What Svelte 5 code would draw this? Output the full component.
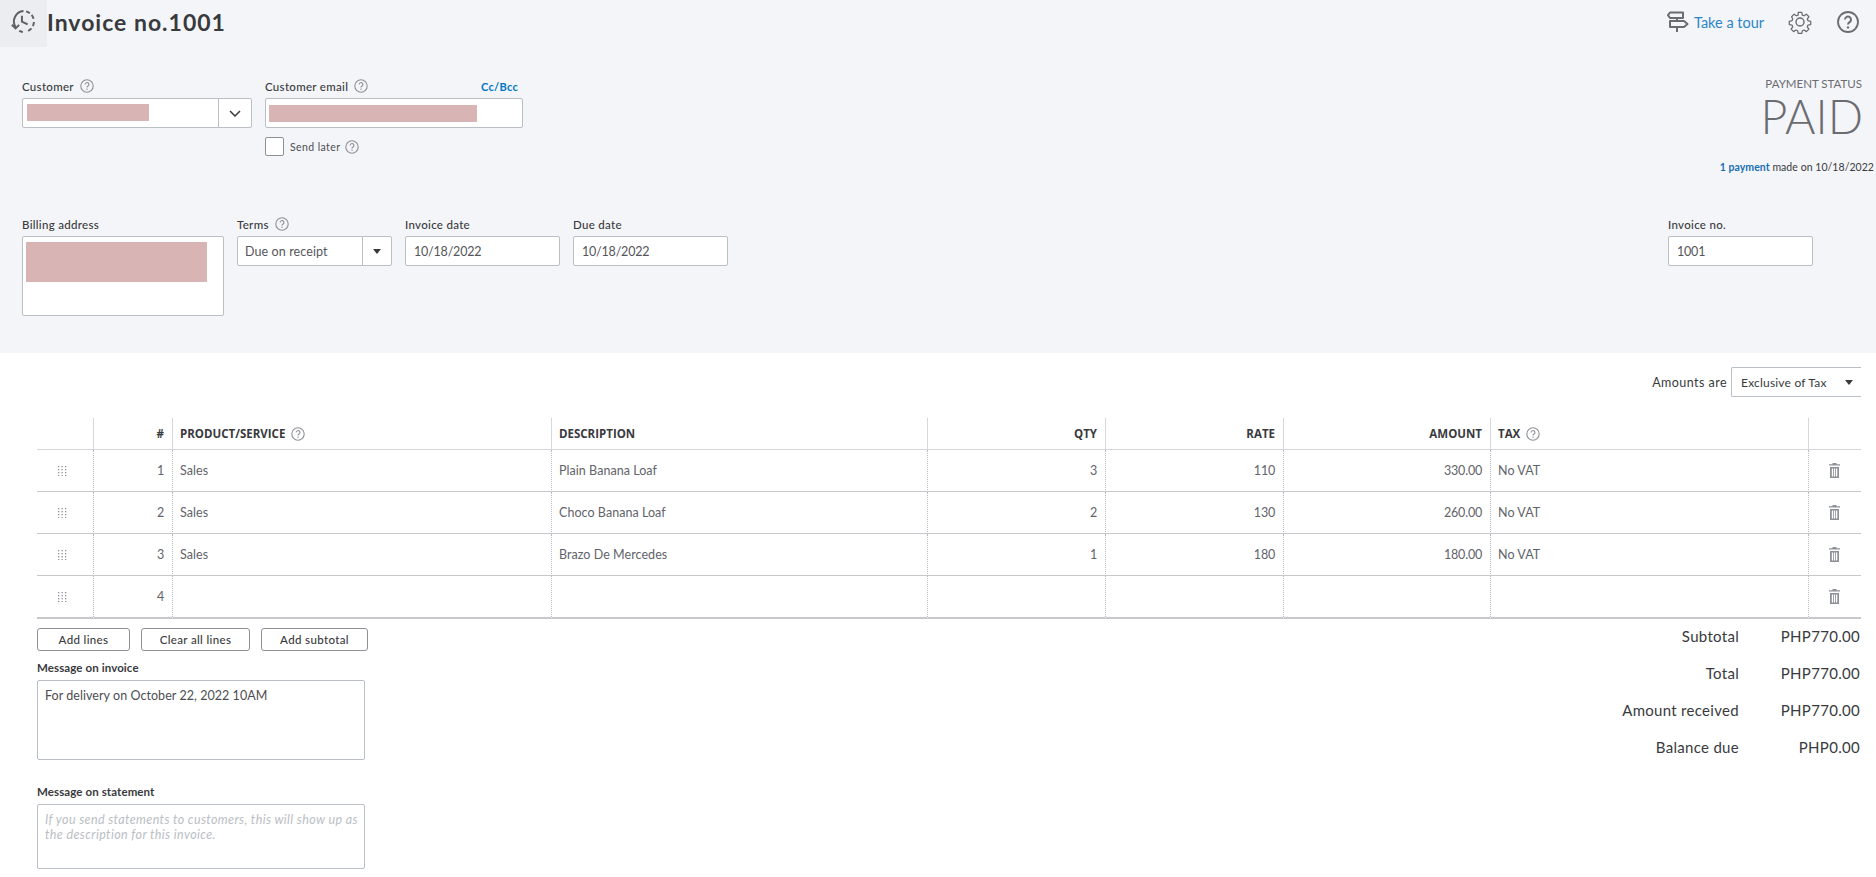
<script>
  const rows = [
    { n: 1, product: 'Sales', desc: 'Plain Banana Loaf', qty: '3', rate: '110', amount: '330.00', tax: 'No VAT' },
    { n: 2, product: 'Sales', desc: 'Choco Banana Loaf', qty: '2', rate: '130', amount: '260.00', tax: 'No VAT' },
    { n: 3, product: 'Sales', desc: 'Brazo De Mercedes', qty: '1', rate: '180', amount: '180.00', tax: 'No VAT' },
    { n: 4, product: '', desc: '', qty: '', rate: '', amount: '', tax: '' }
  ];
  const totals = [
    ['Subtotal', 'PHP770.00'],
    ['Total', 'PHP770.00'],
    ['Amount received', 'PHP770.00'],
    ['Balance due', 'PHP0.00']
  ];
  const dots = [];
  for (let y = 0; y < 4; y++) for (let x = 0; x < 3; x++) dots.push([x * 3.5, y * 3]);
</script>

{#snippet help()}
  <svg class="help" viewBox="0 0 14 14" aria-hidden="true">
    <circle cx="7" cy="7" r="6.2" fill="none" stroke="#8d9096" stroke-width="1.1" />
    <path d="M5.1 5.5a1.9 1.9 0 1 1 2.9 1.6c-.7.4-1 .8-1 1.5" fill="none" stroke="#8d9096" stroke-width="1.1" />
    <circle cx="7" cy="10.3" r=".7" fill="#8d9096" />
  </svg>
{/snippet}

{#snippet caret()}
  <svg class="caret" viewBox="0 0 8 5" aria-hidden="true"><path d="M0 0h8L4 5z" fill="#393a3d" /></svg>
{/snippet}

<div class="page">
  <header class="head">
    <div class="top">
      <button class="history" aria-label="Recent">
        <svg viewBox="0 0 24 24" width="25" height="25" fill="none" stroke="#5f6064" stroke-width="1.9">
          <path d="M4.3 17.2A10 10 0 0 1 12 2" />
          <path d="M14.5 2.3A10 10 0 0 1 21.8 10" stroke-dasharray="4 2.3" />
          <path d="M22 12.5a10 10 0 0 1-8 9.4" stroke-dasharray="4 2.6" />
          <path d="M11.4 22a10 10 0 0 1-3.5-1" />
          <path d="M10.5 6.5v5.7l5.5 2.6" />
          <path d="M.8 15.2l3.6 3.4 3.4-3.4" />
        </svg>
      </button>
      <h1>Invoice no.1001</h1>
      <div class="actions">
        <svg class="post" viewBox="0 0 22 22" fill="none" stroke="#6b6c72" stroke-width="2" stroke-linejoin="round">
          <path d="M3 1.5h13v5.5H3L1 4.2z" />
          <path d="M3 10h14l3.5 3-3.5 3H3z" />
          <path d="M10 7v3M10 16v5" />
        </svg>
        <span class="tour">Take a tour</span>
        <svg class="gear" viewBox="0 0 24 24" fill="none" stroke="#6b6c72" stroke-width="1.4" stroke-linejoin="round">
          <circle cx="12" cy="12" r="4" />
          <path d="M10 1.2h4l.6 3.1 1.9.8 2.6-1.8 2.8 2.8-1.8 2.6.8 1.9 3 .6v3.6l-3 .6-.8 1.9 1.8 2.6-2.8 2.8-2.6-1.8-1.9.8-.6 3h-4l-.6-3-1.9-.8-2.6 1.8-2.8-2.8 1.8-2.6-.8-1.9-3-.6v-3.6l3-.6.8-1.9L2.7 6.1l2.8-2.8 2.6 1.8 1.9-.8z" transform="translate(1.2 1.2) scale(.9)" />
        </svg>
        <svg class="qmark" viewBox="0 0 22 22" fill="none" stroke="#6b6c72" stroke-width="1.8">
          <circle cx="11" cy="11" r="10" />
          <path d="M8 8.6a3 3 0 1 1 4.6 2.5c-1.1.7-1.6 1.2-1.6 2.4" stroke-width="2" />
          <circle cx="11" cy="16.4" r="1.2" fill="#6b6c72" stroke="none" />
        </svg>
      </div>
    </div>

    <div class="row one">
      <div class="field w-customer">
        <div class="label">Customer {@render help()}</div>
        <div class="control">
          <div class="value"><span class="redact r-customer"></span></div>
          <div class="addon wide">
            <svg viewBox="0 0 12 7" width="12" height="7" fill="none" stroke="#393a3d" stroke-width="1.5"><path d="M1 1l5 5 5-5" /></svg>
          </div>
        </div>
      </div>
      <div class="field w-email">
        <div class="label spread"><span>Customer email {@render help()}</span><span class="cc">Cc/Bcc</span></div>
        <div class="control"><div class="value"><span class="redact r-email"></span></div></div>
        <div class="later"><span class="check"></span><span>Send later</span>{@render help()}</div>
      </div>
      <div class="status">
        <div class="status-title">PAYMENT STATUS</div>
        <div class="paid">PAID</div>
        <div class="made"><b>1 payment</b> made on 10/18/2022</div>
      </div>
    </div>

    <div class="row two">
      <div class="field w-billing">
        <div class="label">Billing address</div>
        <div class="control tall"><span class="redact r-billing"></span></div>
      </div>
      <div class="field w-date">
        <div class="label">Terms {@render help()}</div>
        <div class="control">
          <div class="value text">Due on receipt</div>
          <div class="addon">{@render caret()}</div>
        </div>
      </div>
      <div class="field w-date">
        <div class="label">Invoice date</div>
        <div class="control"><div class="value text digits">10/18/2022</div></div>
      </div>
      <div class="field w-date">
        <div class="label">Due date</div>
        <div class="control"><div class="value text digits">10/18/2022</div></div>
      </div>
      <div class="field w-number">
        <div class="label">Invoice no.</div>
        <div class="control"><div class="value text digits">1001</div></div>
      </div>
    </div>
  </header>

  <div class="amounts">
    <span>Amounts are</span>
    <div class="amounts-select"><span>Exclusive of Tax</span>{@render caret()}</div>
  </div>

  <table>
    <colgroup>
      <col style="width:57px" /><col style="width:79px" /><col style="width:379px" /><col style="width:376px" />
      <col style="width:178px" /><col style="width:178px" /><col style="width:207px" /><col style="width:318px" /><col style="width:52px" />
    </colgroup>
    <thead>
      <tr>
        <th></th>
        <th class="num">#</th>
        <th>PRODUCT/SERVICE {@render help()}</th>
        <th>DESCRIPTION</th>
        <th class="num">QTY</th>
        <th class="num">RATE</th>
        <th class="num">AMOUNT</th>
        <th>TAX {@render help()}</th>
        <th></th>
      </tr>
    </thead>
    <tbody>
      {#each rows as r}
        <tr>
          <td class="grip">
            <svg viewBox="0 0 9 10" width="9" height="10">
              {#each dots as d}<rect x={d[0]} y={d[1]} width="1.3" height="1.3" fill="#8d9096" />{/each}
            </svg>
          </td>
          <td class="num">{r.n}</td>
          <td>{r.product}</td>
          <td>{r.desc}</td>
          <td class="num">{r.qty}</td>
          <td class="num">{r.rate}</td>
          <td class="num">{r.amount}</td>
          <td>{r.tax}</td>
          <td class="trash">
            <svg viewBox="0 0 11 15" width="11" height="15" fill="#8d9096">
              <path d="M3.5 0h4v1.2h3.5v1.4H0V1.2h3.5zM1 4h9v11H1zM2.8 5.5v8h1.3v-8zM4.9 5.5v8h1.3v-8zM7 5.5v8h1.3v-8z" fill-rule="evenodd" />
            </svg>
          </td>
        </tr>
      {/each}
    </tbody>
  </table>

  <section class="bottom">
    <div class="left">
      <div class="buttons">
        <button class="b1">Add lines</button>
        <button class="b2">Clear all lines</button>
        <button class="b3">Add subtotal</button>
      </div>
      <div class="msg-label first">Message on invoice</div>
      <div class="area a1">For delivery on October 22, 2022 10AM</div>
      <div class="msg-label second">Message on statement</div>
      <div class="area a2 placeholder">If you send statements to customers, this will show up as the description for this invoice.</div>
    </div>
    <div class="totals">
      {#each totals as t}
        <div class="total"><span class="t-label">{t[0]}</span><span class="t-value">{t[1]}</span></div>
      {/each}
    </div>
  </section>
</div>

<style>
  :global(body) { background: #fff; }
  .page { font-family: Lato, "Open Sans", sans-serif; color: #393a3d; font-size: 13px; width: 1876px; height: 877px; overflow: hidden; }
  .head { background: #f4f5f8; height: 353px; box-sizing: border-box; }
  .top { display: flex; height: 47px; align-items: center; }
  .history { width: 47px; height: 47px; border: 0; background: #ecedf0; padding: 0 0 4px; display: flex; align-items: center; justify-content: center; flex: none; }
  h1 { margin: 0 0 3px 0; font-size: 23px; font-weight: 700; letter-spacing: 1px; color: #393a3d; }
  .actions { margin-left: auto; display: flex; align-items: center; padding-right: 17px; margin-bottom: 3px; }
  .post { width: 22px; height: 22px; }
  .tour { color: #2a86c8; font-size: 14.5px; margin-left: 5px; width: 94px; letter-spacing: 0; }
  .gear { width: 24px; height: 24px; }
  .qmark { width: 22px; height: 22px; margin-left: 25px; }

  .row { display: flex; }
  .one { height: 138px; margin-top: 31px; padding-left: 22px; }
  .two { padding-left: 22px; }
  .field { flex: none; }
  .w-customer { width: 230px; }
  .w-email { width: 258px; margin-left: 13px; }
  .w-billing { width: 202px; }
  .w-date { width: 155px; margin-left: 13px; }
  .w-number { width: 145px; margin-left: auto; margin-right: 63px; }
  .label { height: 18px; box-sizing: border-box; padding-bottom: 2px; margin-bottom: 2px; font-size: 11.5px; font-weight: 500; letter-spacing: .3px; color: #393a3d; display: flex; align-items: center; gap: 3px; white-space: pre; }
  .spread { justify-content: space-between; padding-right: 5px; }
  .spread span:first-child { display: flex; align-items: center; gap: 3px; white-space: pre; }
  .cc { color: #0077c5; font-weight: 700; font-size: 11px; letter-spacing: .3px; }
  .help { width: 14px; height: 14px; flex: none; vertical-align: middle; }
  .control { display: flex; height: 30px; box-sizing: border-box; background: #fff; border: 1px solid #babec5; border-radius: 2px; }
  .tall { display: block; height: 80px; padding: 5px 3px; }
  .value { flex: 1; display: flex; align-items: center; min-width: 0; }
  .text { padding-left: 7px; font-size: 12.5px; letter-spacing: .1px; color: #55565b; }
  .digits { padding-left: 8px; letter-spacing: -.2px; }
  .addon { width: 28px; flex: none; border-left: 1px solid #babec5; display: flex; align-items: center; justify-content: center; }
  .addon.wide { width: 32px; }
  .caret { width: 8px; height: 5px; flex: none; }
  .redact { display: block; background: #d9b4b4; }
  .r-customer { width: 122px; height: 17px; margin-left: 4px; margin-top: -1px; }
  .r-email { width: 208px; height: 17px; margin-left: 3px; }
  .r-billing { width: 181px; height: 40px; }
  .later { display: flex; align-items: center; margin-top: 9px; font-size: 10.5px; letter-spacing: .4px; color: #4d4e52; }
  .later .help { margin-left: 5px; }
  .check { width: 19px; height: 19px; box-sizing: border-box; background: #fff; border: 1px solid #8d9096; border-radius: 2px; margin-right: 6px; }

  .status { margin-left: auto; text-align: right; padding-right: 14px; margin-top: -1px; color: #6b6c72; }
  .status-title { font-size: 11.5px; line-height: 14px; letter-spacing: 0; }
  .paid { font-size: 46.5px; line-height: 44px; font-weight: 300; margin-top: 3px; margin-right: -1px; color: #6b6c72; }
  .made { margin-top: 21px; margin-right: -12px; font-size: 10.5px; line-height: 16px; letter-spacing: .05px; color: #393a3d; }
  .made b { color: #1a6fb3; font-weight: 700; }

  .amounts { display: flex; justify-content: flex-end; align-items: center; gap: 4px; margin-top: 14px; padding-right: 15px; font-size: 12.5px; letter-spacing: .45px; }
  .amounts-select { width: 130px; height: 30px; box-sizing: border-box; border: 1px solid #babec5; border-right: 0; border-radius: 2px 0 0 2px; display: flex; align-items: center; padding-left: 9px; font-size: 12px; letter-spacing: .2px; }
  .amounts-select span { width: 104px; }

  table { margin: 21px 0 0 37px; width: 1824px; table-layout: fixed; border-collapse: separate; border-spacing: 0; }
  th { height: 32px; box-sizing: border-box; padding: 0 8px 0 7px; text-align: left; font-family: "Open Sans", Lato, sans-serif; font-size: 11.5px; font-weight: 700; color: #393a3d; border-bottom: 1px solid #d4d7dc; border-right: 1px solid #d4d7dc; white-space: nowrap; }
  th .help { margin-left: 3px; margin-top: -2px; }
  th:last-child, td:last-child { border-right: 0; }
  td { height: 42px; box-sizing: border-box; padding: 0 8px 0 7px; font-size: 12.5px; letter-spacing: .05px; color: #62636a; border-bottom: 1px solid #c6c8cc; border-right: 1px dotted #b8babf; }
  tbody tr:last-child td { height: 43px; border-bottom: 2px solid #c6c8cc; }
  td.num { text-align: right; letter-spacing: -.2px; }
  th.num { text-align: right; }
  td.grip { padding: 0 0 0 21px; }
  td.trash { padding: 0 0 0 20px; }
  td svg { display: block; }

  .bottom { display: flex; justify-content: space-between; }
  .left { margin-left: 37px; width: 331px; }
  .buttons { display: flex; margin-top: 9px; }
  button { font-family: inherit; }
  .buttons button { height: 23px; flex: none; box-sizing: border-box; background: #fff; border: 1px solid #8d9096; border-radius: 3px; padding: 0; font-size: 11.5px; font-weight: 500; letter-spacing: .35px; color: #393a3d; }
  .b1 { width: 93px; }
  .b2 { width: 109px; margin-left: 11px; }
  .b3 { width: 107px; margin-left: 11px; }
  .msg-label { height: 18px; line-height: 18px; font-size: 11.5px; font-weight: 700; letter-spacing: .1px; color: #393a3d; }
  .first { margin-top: 8px; }
  .second { margin-top: 23px; }
  .area { margin-top: 3px; box-sizing: border-box; width: 328px; border: 1px solid #babec5; border-radius: 2px; padding: 7px 7px; font-size: 12.5px; line-height: 15px; letter-spacing: .05px; color: #4d4e52; }
  .a1 { height: 80px; }
  .a2 { height: 65px; }
  .placeholder { font-style: italic; color: #babec5; font-size: 12.5px; letter-spacing: .38px; padding-right: 2px; }
  .totals { width: 400px; padding-right: 16px; margin-top: -2px; }
  .total { height: 37px; display: flex; justify-content: flex-end; align-items: center; font-size: 15px; letter-spacing: .3px; color: #393a3d; }
  .t-value { width: 121px; text-align: right; }
</style>
